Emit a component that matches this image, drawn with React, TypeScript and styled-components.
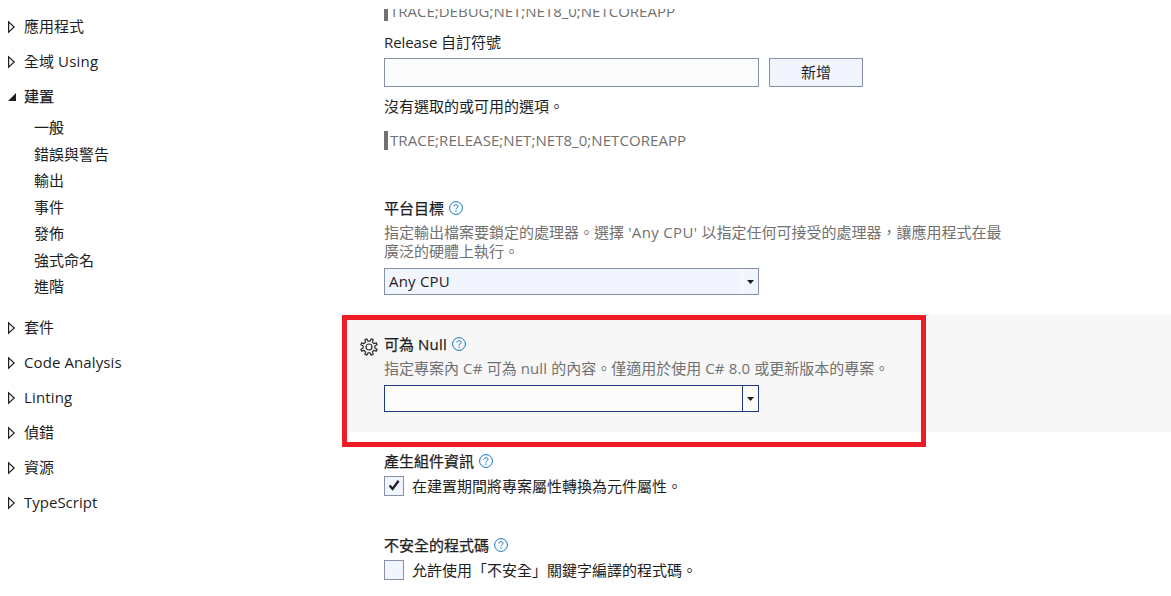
import React from "react";
import styled, { createGlobalStyle, css } from "styled-components";

const GlobalStyle = createGlobalStyle`
  *, *::before, *::after { box-sizing: border-box; }
  body {
    margin: 0;
    background: #ffffff;
    color: #1e1e1e;
    font-family: "Noto Sans CJK TC", "Open Sans", sans-serif;
    font-size: 15px;
    line-height: 20px;
  }
`;

const Page = styled.div`
  display: flex;
  height: 596px;
  overflow: hidden;
  white-space: nowrap;
`;

const Latin = styled.span<{ $track?: number }>`
  font-family: "Open Sans", "Noto Sans", sans-serif;
  font-size: 15px;
  line-height: 1;
  letter-spacing: ${(p) => p.$track ?? 0.1}px;
`;

const Sidebar = styled.nav`
  flex: 0 0 349px;
  padding-top: 9px;
`;

const NavRow = styled.div<{ $active?: boolean }>`
  display: flex;
  align-items: center;
  height: 35px;
  padding-left: 7px;
  ${(p) => p.$active && css`-webkit-text-stroke: 0.25px #1e1e1e;`}
  svg { flex: none; margin-right: 7px; }
`;

const NavText = styled.span`
  padding-bottom: 2px;
`;

const SubList = styled.div`
  display: flex;
  flex-direction: column;
  padding: 0 0 10.5px 34px;
`;

const SubItem = styled.div<{ $current?: boolean }>`
  height: 26.5px;
  line-height: 26.5px;
  ${(p) => p.$current && css`-webkit-text-stroke: 0.15px #1e1e1e;`}
`;

const Main = styled.main`
  flex: 1;
  min-width: 0;
  display: flex;
  flex-direction: column;
`;

const Section = styled.section<{ $height: number; $top?: number }>`
  flex: none;
  height: ${(p) => p.$height}px;
  padding: ${(p) => p.$top ?? 0}px 0 0 35px;
`;

const HighlightSection = styled(Section)`
  position: relative;
  background: #f7f7f7;
`;

const Marker = styled.div`
  position: absolute;
  left: -7px;
  top: 0;
  width: 584px;
  height: 132px;
  border: 5px solid #ee1c25;
  pointer-events: none;
`;

const GearSlot = styled.div`
  position: absolute;
  left: 10px;
  top: 22px;
  line-height: 0;
`;

const Clip = styled.div`
  display: flex;
  align-items: flex-end;
  height: 12px;
  margin-top: 9px;
  overflow: hidden;
`;

const Symbols = styled.div`
  flex: none;
  height: 19px;
  padding-left: 2px;
  border-left: 4px solid #717171;
  color: #717171;
  line-height: 17px;
`;

const Label = styled.div<{ $above?: number; $below?: number }>`
  height: 20px;
  margin: ${(p) => p.$above ?? 0}px 0 ${(p) => p.$below ?? 0}px;
`;

const FieldRow = styled.div`
  display: flex;
  gap: 10px;
  margin-bottom: 9px;
`;

const TextField = styled.div`
  width: 375px;
  height: 29px;
  border: 1px solid #8591a8;
  background: #fcfcfc;
`;

const Button = styled.button`
  width: 94px;
  height: 29px;
  padding: 0 0 2px;
  border: 1px solid #8591a8;
  background: #f2f4fe;
  color: #1e1e1e;
  font: inherit;
`;

const Heading = styled.h3`
  display: flex;
  align-items: center;
  gap: 5px;
  height: 20px;
  margin: 0;
  font-size: 15px;
  font-weight: 400;
  -webkit-text-stroke: 0.25px #1e1e1e;
`;

const Description = styled.p`
  margin: 4px 0 8px;
  line-height: 19px;
  color: #717171;
`;

const Select = styled.div<{ $focused?: boolean }>`
  display: flex;
  width: 375px;
  height: 27px;
  border: 1px solid ${(p) => (p.$focused ? "#1f3a7a" : "#8591a8")};
  background: ${(p) => (p.$focused ? "#fcfcfc" : "#f2f4fe")};
`;

const SelectValue = styled.div`
  flex: 1;
  padding-left: 4px;
  line-height: 23px;
`;

const SelectArrow = styled.div<{ $focused?: boolean }>`
  display: flex;
  align-items: center;
  justify-content: center;
  width: 16px;
  border-left: 1px solid ${(p) => (p.$focused ? "#1f3a7a" : "#fcfcff")};
`;

const CheckRow = styled.div`
  display: flex;
  align-items: center;
  gap: 8px;
  margin-top: 5px;
`;

const Box = styled.span`
  display: flex;
  align-items: center;
  justify-content: center;
  width: 20px;
  height: 20px;
  border: 1px solid #8591a8;
  background: #f2f4fe;
`;

const Collapsed = () => (
  <svg width="10" height="14" viewBox="0 0 10 14">
    <path d="M1.6 1.8V12.2L7.2 7Z" fill="none" stroke="#1e1e1e" strokeWidth="1.2" />
  </svg>
);

const Expanded = () => (
  <svg width="10" height="14" viewBox="0 0 10 14">
    <path d="M9 3V11H1Z" fill="#1e1e1e" />
  </svg>
);

const Help = () => (
  <svg width="14" height="14" viewBox="0 0 14 14" fill="none" stroke="#0f75bd">
    <circle cx="7" cy="7" r="6.4" strokeWidth="1" />
    <path d="M5 5.6C5 4.4 5.8 3.7 7 3.7S9 4.4 9 5.4C9 6.8 7 6.8 7 8.5" strokeWidth="1" />
    <path d="M7 9.5V10.7" strokeWidth="1.1" />
  </svg>
);

const gearPath = (() => {
  const pts: string[] = [];
  for (let i = 0; i < 8; i++) {
    const base = ((i + 0.5) * Math.PI) / 4;
    [
      [-0.22, 5.9],
      [-0.13, 8.4],
      [0.13, 8.4],
      [0.22, 5.9],
    ].forEach(([a, r]) => {
      pts.push(`${(9 + r * Math.sin(base + a)).toFixed(2)} ${(9 - r * Math.cos(base + a)).toFixed(2)}`);
    });
  }
  return `M${pts.join("L")}Z`;
})();

const Gear = () => (
  <svg width="20" height="20" viewBox="-1 -1 20 20" fill="none" stroke="#2a2a2a">
    <path d={gearPath} strokeWidth="1.2" strokeLinejoin="round" />
    <circle cx="9" cy="9" r="3" strokeWidth="1.2" />
  </svg>
);

const Caret = () => (
  <svg width="7" height="4" viewBox="0 0 7 4">
    <path d="M0 0H7L3.5 4Z" fill="#1e1e1e" />
  </svg>
);

const Check = () => (
  <svg width="14" height="14" viewBox="0 0 14 14">
    <path d="M2.6 6.6L5.6 10L11.6 1.8" fill="none" stroke="#1e1e1e" strokeWidth="2.3" />
  </svg>
);

const subItems = ["一般", "錯誤與警告", "輸出", "事件", "發佈", "強式命名", "進階"];

export default function App() {
  return (
    <>
      <GlobalStyle />
      <Page>
        <Sidebar>
          <NavRow><Collapsed /><NavText>應用程式</NavText></NavRow>
          <NavRow><Collapsed /><NavText>全域<Latin $track={0.2}> Using</Latin></NavText></NavRow>
          <NavRow $active><Expanded /><NavText>建置</NavText></NavRow>
          <SubList>
            {subItems.map((name, i) => (
              <SubItem key={name} $current={i === 0}>{name}</SubItem>
            ))}
          </SubList>
          <NavRow><Collapsed /><NavText>套件</NavText></NavRow>
          <NavRow><Collapsed /><NavText><Latin>Code Analysis</Latin></NavText></NavRow>
          <NavRow><Collapsed /><NavText><Latin $track={0.15}>Linting</Latin></NavText></NavRow>
          <NavRow><Collapsed /><NavText>偵錯</NavText></NavRow>
          <NavRow><Collapsed /><NavText>資源</NavText></NavRow>
          <NavRow><Collapsed /><NavText><Latin $track={0}>TypeScript</Latin></NavText></NavRow>
        </Sidebar>
        <Main>
          <Section $height={198}>
            <Clip>
              <Symbols><Latin $track={0}>TRACE;DEBUG;NET;NET8_0;NETCOREAPP</Latin></Symbols>
            </Clip>
            <Label $above={11} $below={6}>
              <Latin $track={-0.08}>Release </Latin>自訂符號
            </Label>
            <FieldRow>
              <TextField />
              <Button>新增</Button>
            </FieldRow>
            <Label $below={15}>沒有選取的或可用的選項。</Label>
            <Symbols><Latin $track={0.06}>TRACE;RELEASE;NET;NET8_0;NETCOREAPP</Latin></Symbols>
          </Section>
          <Section $height={117}>
            <Heading>平台目標<Help /></Heading>
            <Description>
              指定輸出檔案要鎖定的處理器。選擇<Latin $track={0.33}> 'Any CPU' </Latin>以指定任何可接受的處理器，讓應用程式在最
              <br />
              廣泛的硬體上執行。
            </Description>
            <Select>
              <SelectValue><Latin $track={0.2}>Any CPU</Latin></SelectValue>
              <SelectArrow><Caret /></SelectArrow>
            </Select>
          </Section>
          <HighlightSection $height={117} $top={19}>
            <GearSlot><Gear /></GearSlot>
            <Heading><span>可為<Latin $track={0.2}> Null</Latin></span><Help /></Heading>
            <Description>
              指定專案內<Latin $track={0.2}> C# </Latin>可為<Latin> null </Latin>的內容。僅適用於使用<Latin $track={0.15}> C# 8.0 </Latin>或更新版本的專案。
            </Description>
            <Select $focused>
              <SelectValue />
              <SelectArrow $focused><Caret /></SelectArrow>
            </Select>
            <Marker />
          </HighlightSection>
          <Section $height={84} $top={19}>
            <Heading>產生組件資訊<Help /></Heading>
            <CheckRow><Box><Check /></Box>在建置期間將專案屬性轉換為元件屬性。</CheckRow>
          </Section>
          <Section $height={80} $top={19}>
            <Heading>不安全的程式碼<Help /></Heading>
            <CheckRow><Box />允許使用「不安全」關鍵字編譯的程式碼。</CheckRow>
          </Section>
        </Main>
      </Page>
    </>
  );
}
